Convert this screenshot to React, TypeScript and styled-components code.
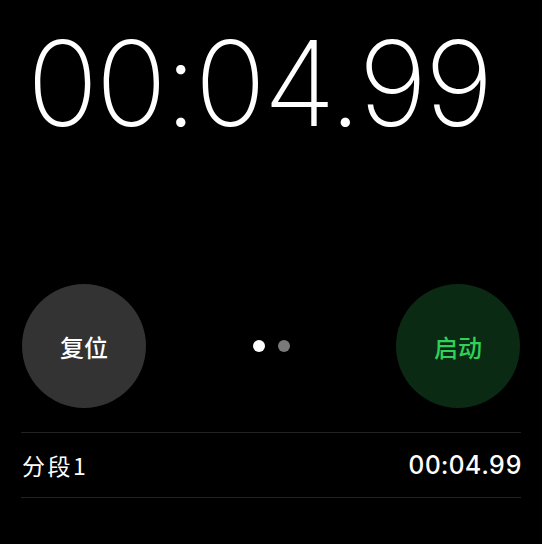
import React from "react";
import styled, { createGlobalStyle } from "styled-components";

const Global = createGlobalStyle`
  html, body { margin: 0; padding: 0; background: #000; }
  body { font-family: Inter, "Noto Sans", "Noto Sans CJK SC", sans-serif; }
`;

const Page = styled.div`
  width: 542px;
  height: 544px;
  background: #000;
  display: flex;
  flex-direction: column;
  box-sizing: border-box;
  overflow: hidden;
`;

const Display = styled.div`
  height: 170px;
  display: flex;
  align-items: center;
  justify-content: center;
  color: #fff;
  font-family: Inter, sans-serif;
  font-weight: 250;
  font-size: 118px;
  letter-spacing: -2.5px;
  padding: 0 24px 4px 0;
  box-sizing: border-box;
`;

const Controls = styled.div`
  margin-top: 114px;
  padding: 0 22px;
  display: flex;
  align-items: center;
  justify-content: space-between;
`;

const RoundButton = styled.button<{ $tone: "gray" | "green" }>`
  width: 124px;
  height: 124px;
  border-radius: 50%;
  border: none;
  padding: 0;
  display: flex;
  align-items: center;
  justify-content: center;
  font-family: "Noto Sans CJK SC", sans-serif;
  font-size: 24px;
  font-weight: 500;
  background: ${(p) => (p.$tone === "green" ? "#0b2a13" : "#333333")};
  color: ${(p) => (p.$tone === "green" ? "#30d158" : "#ffffff")};
`;

const Dots = styled.div`
  display: flex;
  gap: 13px;
  align-items: center;
`;

const Dot = styled.span<{ $active?: boolean }>`
  width: 12px;
  height: 12px;
  border-radius: 50%;
  background: ${(p) => (p.$active ? "#ffffff" : "#7a7a7a")};
`;

const Laps = styled.div`
  margin: 24px 21px 0;
  border-top: 1px solid #222224;
`;

const LapRow = styled.div`
  height: 64px;
  display: flex;
  align-items: center;
  justify-content: space-between;
  border-bottom: 1px solid #222224;
  color: #fff;
`;

const LapLabel = styled.span`
  font-family: "Noto Sans CJK SC", sans-serif;
  font-size: 23px;
  font-weight: 400;
  padding-left: 1px;
  letter-spacing: 2.5px;
`;

const LapTime = styled.span`
  font-family: Inter, sans-serif;
  font-size: 25px;
  font-weight: 500;
  letter-spacing: 0.4px;
  margin-right: -1px;
  font-variant-numeric: tabular-nums;
`;

export default function App() {
  return (
    <>
      <Global />
      <Page>
        <Display>00:04.99</Display>
        <Controls>
          <RoundButton $tone="gray">复位</RoundButton>
          <Dots>
            <Dot $active />
            <Dot />
          </Dots>
          <RoundButton $tone="green">启动</RoundButton>
        </Controls>
        <Laps>
          <LapRow>
            <LapLabel>分段1</LapLabel>
            <LapTime>00:04.99</LapTime>
          </LapRow>
        </Laps>
      </Page>
    </>
  );
}
